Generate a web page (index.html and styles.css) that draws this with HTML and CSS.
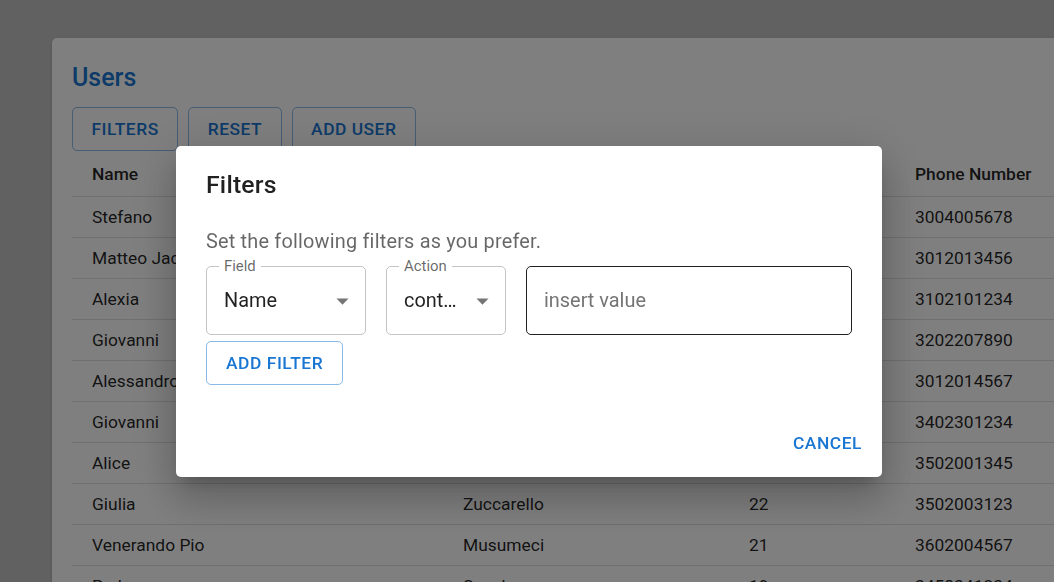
FILE: index.html
```html
<!DOCTYPE html>
<html lang="en">
<head>
<meta charset="utf-8">
<title>Users</title>
<link rel="stylesheet" href="styles.css">
</head>
<body>
<div class="page">
  <div class="card">
    <h1 class="title">Users</h1>
    <div class="toolbar">
      <button class="btn-outlined">FILTERS</button>
      <button class="btn-outlined">RESET</button>
      <button class="btn-outlined">ADD USER</button>
    </div>
    <table class="table">
      <colgroup>
        <col class="c1"><col class="c2"><col class="c3"><col class="c4">
      </colgroup>
      <thead>
        <tr><th>Name</th><th>Surname</th><th>Age</th><th>Phone Number</th></tr>
      </thead>
      <tbody>
        <tr><td>Stefano</td><td>Rossi</td><td>25</td><td>3004005678</td></tr>
        <tr><td>Matteo Jacopo</td><td>Bianchi</td><td>23</td><td>3012013456</td></tr>
        <tr><td>Alexia</td><td>Ferrari</td><td>24</td><td>3102101234</td></tr>
        <tr><td>Giovanni</td><td>Russo</td><td>26</td><td>3202207890</td></tr>
        <tr><td>Alessandro</td><td>Romano</td><td>22</td><td>3012014567</td></tr>
        <tr><td>Giovanni</td><td>Colombo</td><td>27</td><td>3402301234</td></tr>
        <tr><td>Alice</td><td>Ricci</td><td>21</td><td>3502001345</td></tr>
        <tr><td>Giulia</td><td>Zuccarello</td><td>22</td><td>3502003123</td></tr>
        <tr><td>Venerando Pio</td><td>Musumeci</td><td>21</td><td>3602004567</td></tr>
        <tr><td>Pedro</td><td>Sanchez</td><td>19</td><td>3458341234</td></tr>
      </tbody>
    </table>
  </div>
</div>

<div class="overlay">
  <div class="dialog" role="dialog">
    <h2 class="dialog-title">Filters</h2>
    <div class="dialog-content">
      <p class="dialog-text">Set the following filters as you prefer.</p>
      <div class="fields">
        <div class="outlined select field-name">
          <span class="float-label">Field</span>
          <span class="value">Name</span>
          <svg class="arrow" viewBox="0 0 24 24" width="29" height="29"><path d="M7 10l5 5 5-5z"/></svg>
        </div>
        <div class="outlined select field-action">
          <span class="float-label">Action</span>
          <span class="value">contains</span>
          <svg class="arrow" viewBox="0 0 24 24" width="29" height="29"><path d="M7 10l5 5 5-5z"/></svg>
        </div>
        <div class="outlined input-box">
          <span class="placeholder">insert value</span>
        </div>
      </div>
      <button class="btn-outlined btn-add">ADD FILTER</button>
    </div>
    <div class="dialog-actions">
      <button class="btn-text">CANCEL</button>
    </div>
  </div>
</div>
</body>
</html>
```

FILE: styles.css
```css
html, body {
  margin: 0;
  padding: 0;
  overflow: hidden;
  width: 1054px;
  height: 582px;
}

body {
  background: #c2c2c2;
  font-family: Roboto, "Liberation Sans", Arial, sans-serif;
  color: rgba(0, 0, 0, 0.87);
}

.page {
  padding: 38px 0 0 52px;
}

.card {
  width: 1100px;
  background: #ffffff;
  border-radius: 5px;
  padding: 20px;
  box-shadow: 0 2px 1px -1px rgba(0,0,0,0.2), 0 1px 1px 0 rgba(0,0,0,0.14), 0 1px 3px 0 rgba(0,0,0,0.12);
}

.title {
  margin: 0 0 10px 0;
  padding-top: 1px;
  font-size: 25px;
  font-weight: 500;
  line-height: 38px;
  color: #1976d2;
}

.toolbar {
  display: flex;
  gap: 10px;
}

.btn-outlined {
  height: 44px;
  padding: 0 18.5px;
  border: 1px solid rgba(25, 118, 210, 0.5);
  border-radius: 5px;
  background: transparent;
  color: #1976d2;
  font-family: Roboto, "Liberation Sans", Arial, sans-serif;
  font-size: 17.4px;
  font-weight: 500;
  letter-spacing: 0.5px;
  cursor: pointer;
}

.table {
  border-collapse: collapse;
  width: 1100px;
  table-layout: fixed;
}

.c1 { width: 371px; }
.c2 { width: 286px; }
.c3 { width: 166px; }

.table th,
.table td {
  text-align: left;
  padding: 0 20px;
  font-size: 17.4px;
  border-bottom: 1px solid #e0e0e0;
  white-space: nowrap;
}

.table th {
  height: 45px;
  font-weight: 500;
}

.table td {
  height: 40px;
  font-weight: 400;
}

.overlay {
  position: fixed;
  inset: 0;
  background: rgba(0, 0, 0, 0.5);
}

.dialog {
  position: absolute;
  left: 176px;
  top: 146px;
  width: 706px;
  background: #ffffff;
  border-radius: 5px;
  box-shadow: 0 11px 15px -7px rgba(0,0,0,0.2), 0 24px 38px 3px rgba(0,0,0,0.14), 0 9px 46px 8px rgba(0,0,0,0.12);
}

.dialog-title {
  margin: 0;
  padding: 20px 30px 18px 30px;
  font-size: 24.8px;
  font-weight: 500;
  line-height: 38px;
  letter-spacing: 0.2px;
}

.dialog-content {
  padding: 0 30px 24px 30px;
  display: flex;
  flex-direction: column;
  align-items: flex-start;
}

.dialog-text {
  margin: 5px 0 10px 0;
  font-size: 19.9px;
  line-height: 29px;
  color: rgba(0, 0, 0, 0.6);
  letter-spacing: 0.2px;
}

.fields {
  display: flex;
  gap: 20px;
}

.outlined {
  position: relative;
  height: 69px;
  box-sizing: border-box;
  border: 1px solid rgba(0, 0, 0, 0.23);
  border-radius: 5px;
  display: flex;
  align-items: center;
  padding: 0 17px;
  font-size: 19.9px;
}

.field-name { width: 160px; }
.field-action { width: 120px; }

.select .value {
  flex: 1;
  min-width: 0;
  overflow: hidden;
  text-overflow: ellipsis;
  white-space: nowrap;
  padding-right: 30px;
  color: rgba(0, 0, 0, 0.87);
}

.arrow {
  position: absolute;
  right: 8px;
  top: 50%;
  transform: translateY(-50%);
  fill: rgba(0, 0, 0, 0.54);
}

.float-label {
  position: absolute;
  left: 12px;
  top: -10px;
  padding: 0 5px;
  background: #ffffff;
  font-size: 14.9px;
  line-height: 18px;
  color: rgba(0, 0, 0, 0.6);
}

.input-box {
  width: 326px;
  border-color: rgba(0, 0, 0, 0.87);
}

.placeholder {
  color: #757575;
}

.btn-add {
  margin-top: 6px;
  padding: 0 19px;
  letter-spacing: 0.55px;
}

.dialog-actions {
  display: flex;
  justify-content: flex-end;
  padding: 12px 10px;
}

.btn-text {
  height: 44px;
  padding: 0 10px;
  border: none;
  background: transparent;
  color: #1976d2;
  font-family: Roboto, "Liberation Sans", Arial, sans-serif;
  font-size: 17.4px;
  font-weight: 500;
  letter-spacing: 0.55px;
  cursor: pointer;
}
```
